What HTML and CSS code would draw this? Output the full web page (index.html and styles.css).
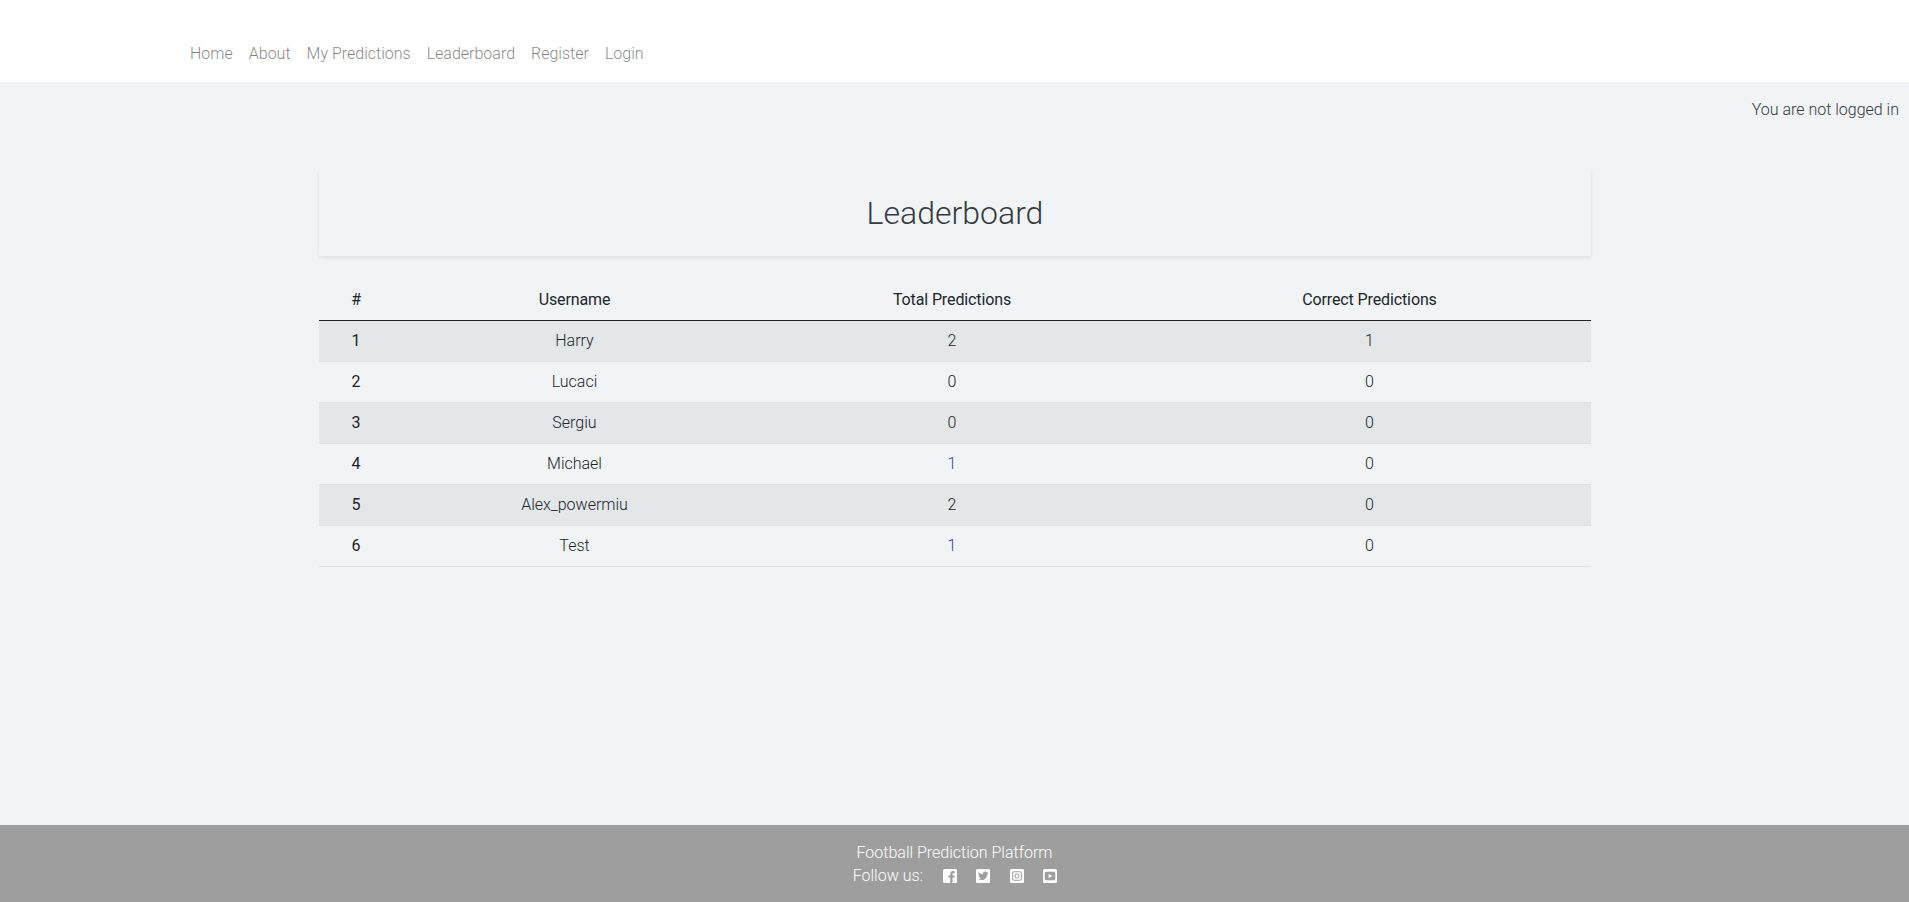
FILE: index.html
```html
<!DOCTYPE html>
<html lang="en">
<head>
<meta charset="utf-8">
<title>Leaderboard</title>
<link rel="stylesheet" href="styles.css">
</head>
<body>
<header class="navbar">
  <nav class="nav">
    <a href="#">Home</a>
    <a href="#">About</a>
    <a href="#">My Predictions</a>
    <a href="#">Leaderboard</a>
    <a href="#">Register</a>
    <a href="#">Login</a>
  </nav>
</header>
<main class="main">
  <p class="status">You are not logged in</p>
  <section class="content">
    <div class="title-card"><h1>Leaderboard</h1></div>
    <table class="board">
      <colgroup>
        <col class="col-rank"><col class="col-user"><col class="col-total"><col class="col-correct">
      </colgroup>
      <thead>
        <tr><th>#</th><th>Username</th><th>Total Predictions</th><th>Correct Predictions</th></tr>
      </thead>
      <tbody>
        <tr><th>1</th><td>Harry</td><td>2</td><td>1</td></tr>
        <tr><th>2</th><td>Lucaci</td><td>0</td><td>0</td></tr>
        <tr><th>3</th><td>Sergiu</td><td>0</td><td>0</td></tr>
        <tr><th>4</th><td>Michael</td><td class="tinted">1</td><td>0</td></tr>
        <tr><th>5</th><td>Alex_powermiu</td><td>2</td><td>0</td></tr>
        <tr><th>6</th><td>Test</td><td class="tinted">1</td><td>0</td></tr>
      </tbody>
    </table>
  </section>
</main>
<footer class="footer">
  <div class="footer-title">Football Prediction Platform</div>
  <div class="follow">
    <span class="follow-label">Follow us:</span>
    <a class="social" href="#" aria-label="Facebook">
      <svg viewBox="0 0 14 14" width="14" height="14"><path fill="#fff" d="M1.500 0h11A1.500 1.500 0 0 1 14 1.500v11a1.500 1.500 0 0 1-1.500 1.500H9.500V8.700h1.800l.4-2.200H9.500V5.400c0-.7.300-1.100 1.100-1.100h1.100V2.300c-.5-.1-1-.2-1.600-.2-1.800 0-2.900 1-2.900 3v1.400H5.400v2.200h1.800V14H1.500A1.500 1.500 0 0 1 0 12.500v-11A1.500 1.500 0 0 1 1.500 0z"/></svg>
    </a>
    <a class="social" href="#" aria-label="Twitter">
      <svg viewBox="0 0 14 14" width="14" height="14"><path fill="#fff" fill-rule="evenodd" d="M1.500 0h11A1.500 1.500 0 0 1 14 1.500v11a1.500 1.500 0 0 1-1.500 1.500h-11A1.500 1.500 0 0 1 0 12.500v-11A1.500 1.500 0 0 1 1.500 0zM12.200 3.700c-.4.200-.8.300-1.200.3.400-.3.800-.7.900-1.200-.4.300-.9.400-1.300.5a2.100 2.100 0 0 0-3.600 1.900c-1.800-.1-3.300-1-4.300-2.300-.6 1-.3 2.200.7 2.800-.3 0-.7-.1-1-.3 0 1 .8 2 1.800 2.200-.3.100-.7.100-1 0 .3.900 1.100 1.500 2 1.500-.9.700-2 1.100-3.100.9 1 .6 2.100 1 3.300 1 4 0 6.200-3.300 6-6.300.4-.3.800-.6 1-1z"/></svg>
    </a>
    <a class="social" href="#" aria-label="Instagram">
      <svg viewBox="0 0 14 14" width="14" height="14"><path fill="#fff" fill-rule="evenodd" d="M1.500 0h11A1.500 1.500 0 0 1 14 1.500v11a1.500 1.500 0 0 1-1.500 1.500h-11A1.500 1.500 0 0 1 0 12.500v-11A1.500 1.500 0 0 1 1.500 0zM4 2.200A1.800 1.800 0 0 0 2.200 4v6A1.800 1.800 0 0 0 4 11.800h6a1.800 1.800 0 0 0 1.800-1.800V4A1.800 1.800 0 0 0 10 2.200H4zm0 1h6a.8.8 0 0 1 .8.8v6a.8.8 0 0 1-.8.8H4a.8.8 0 0 1-.8-.8V4a.8.8 0 0 1 .8-.8zm3 1.300a2.500 2.500 0 1 0 0 5 2.500 2.500 0 0 0 0-5zm0 1a1.500 1.500 0 1 1 0 3 1.500 1.500 0 0 1 0-3z"/></svg>
    </a>
    <a class="social" href="#" aria-label="YouTube">
      <svg viewBox="0 0 14 14" width="14" height="14"><path fill="#fff" fill-rule="evenodd" d="M1.500 0h11A1.500 1.500 0 0 1 14 1.500v11a1.500 1.500 0 0 1-1.500 1.500h-11A1.500 1.500 0 0 1 0 12.500v-11A1.500 1.500 0 0 1 1.500 0zM3.200 2.800a1.500 1.500 0 0 0-1.500 1.500v5.400a1.500 1.500 0 0 0 1.500 1.500h7.600a1.500 1.500 0 0 0 1.500-1.500V4.300a1.500 1.500 0 0 0-1.500-1.500H3.200zM5.600 5 9.400 7 5.600 9V5z"/></svg>
    </a>
  </div>
</footer>
</body>
</html>
```

FILE: styles.css
```css
* {
  box-sizing: border-box;
}

html,
body {
  height: 100%;
}

body {
  margin: 0;
  display: flex;
  flex-direction: column;
  min-height: 902px;
  background: #f0f4f7;
  color: #212529;
  font-family: Roboto, "Liberation Sans", sans-serif;
  font-size: 16px;
  font-weight: 300;
  line-height: 24px;
}

a {
  text-decoration: none;
}

.navbar {
  height: 82px;
  flex: none;
  background: #fff;
  padding: 42px 190px 0;
}

.nav {
  display: flex;
  gap: 16px;
}

.nav a {
  color: rgba(0, 0, 0, 0.5);
}

.main {
  flex: 1;
  padding: 0 10px;
}

.status {
  margin: 16px 0 0;
  text-align: right;
  color: #33383d;
}

.content {
  width: 1272px;
  margin: 48px 0 0 309px;
}

.title-card {
  height: 86px;
  padding-top: 24px;
  text-align: center;
  box-shadow: 0 2px 4px rgba(0, 0, 0, 0.08);
}

.title-card h1 {
  margin: 0;
  font-size: 32px;
  font-weight: 300;
  line-height: 38px;
  color: #343a40;
}

.board {
  width: 100%;
  margin-top: 23px;
  border-collapse: collapse;
  table-layout: fixed;
  text-align: center;
}

.col-rank {
  width: 74px;
}

.col-user {
  width: 363px;
}

.col-total {
  width: 392px;
}

.col-correct {
  width: 443px;
}

.board th,
.board td {
  height: 41px;
  padding: 8px;
  border-top: 1px solid #dee2e6;
  vertical-align: middle;
}

.board th {
  font-weight: 400;
  color: #212529;
}

.board thead th {
  padding: 9px 8px 7px;
  border-top: 0;
  border-bottom: 1px solid #212529;
  letter-spacing: -0.12px;
}

.board tbody tr:nth-child(odd) {
  background: rgba(0, 0, 0, 0.05);
}

.board tbody tr:last-child th,
.board tbody tr:last-child td {
  border-bottom: 1px solid #dee2e6;
}

.board .tinted {
  color: #394480;
}

.footer {
  height: 77px;
  flex: none;
  background: #9e9e9e;
  color: #fff;
  padding-top: 16px;
  text-align: center;
}

.footer-title {
  line-height: 24px;
}

.follow {
  display: flex;
  justify-content: center;
  align-items: center;
  height: 22px;
  padding-left: 1px;
  gap: 19.6px;
}

.social {
  display: flex;
  width: 14px;
}
```
